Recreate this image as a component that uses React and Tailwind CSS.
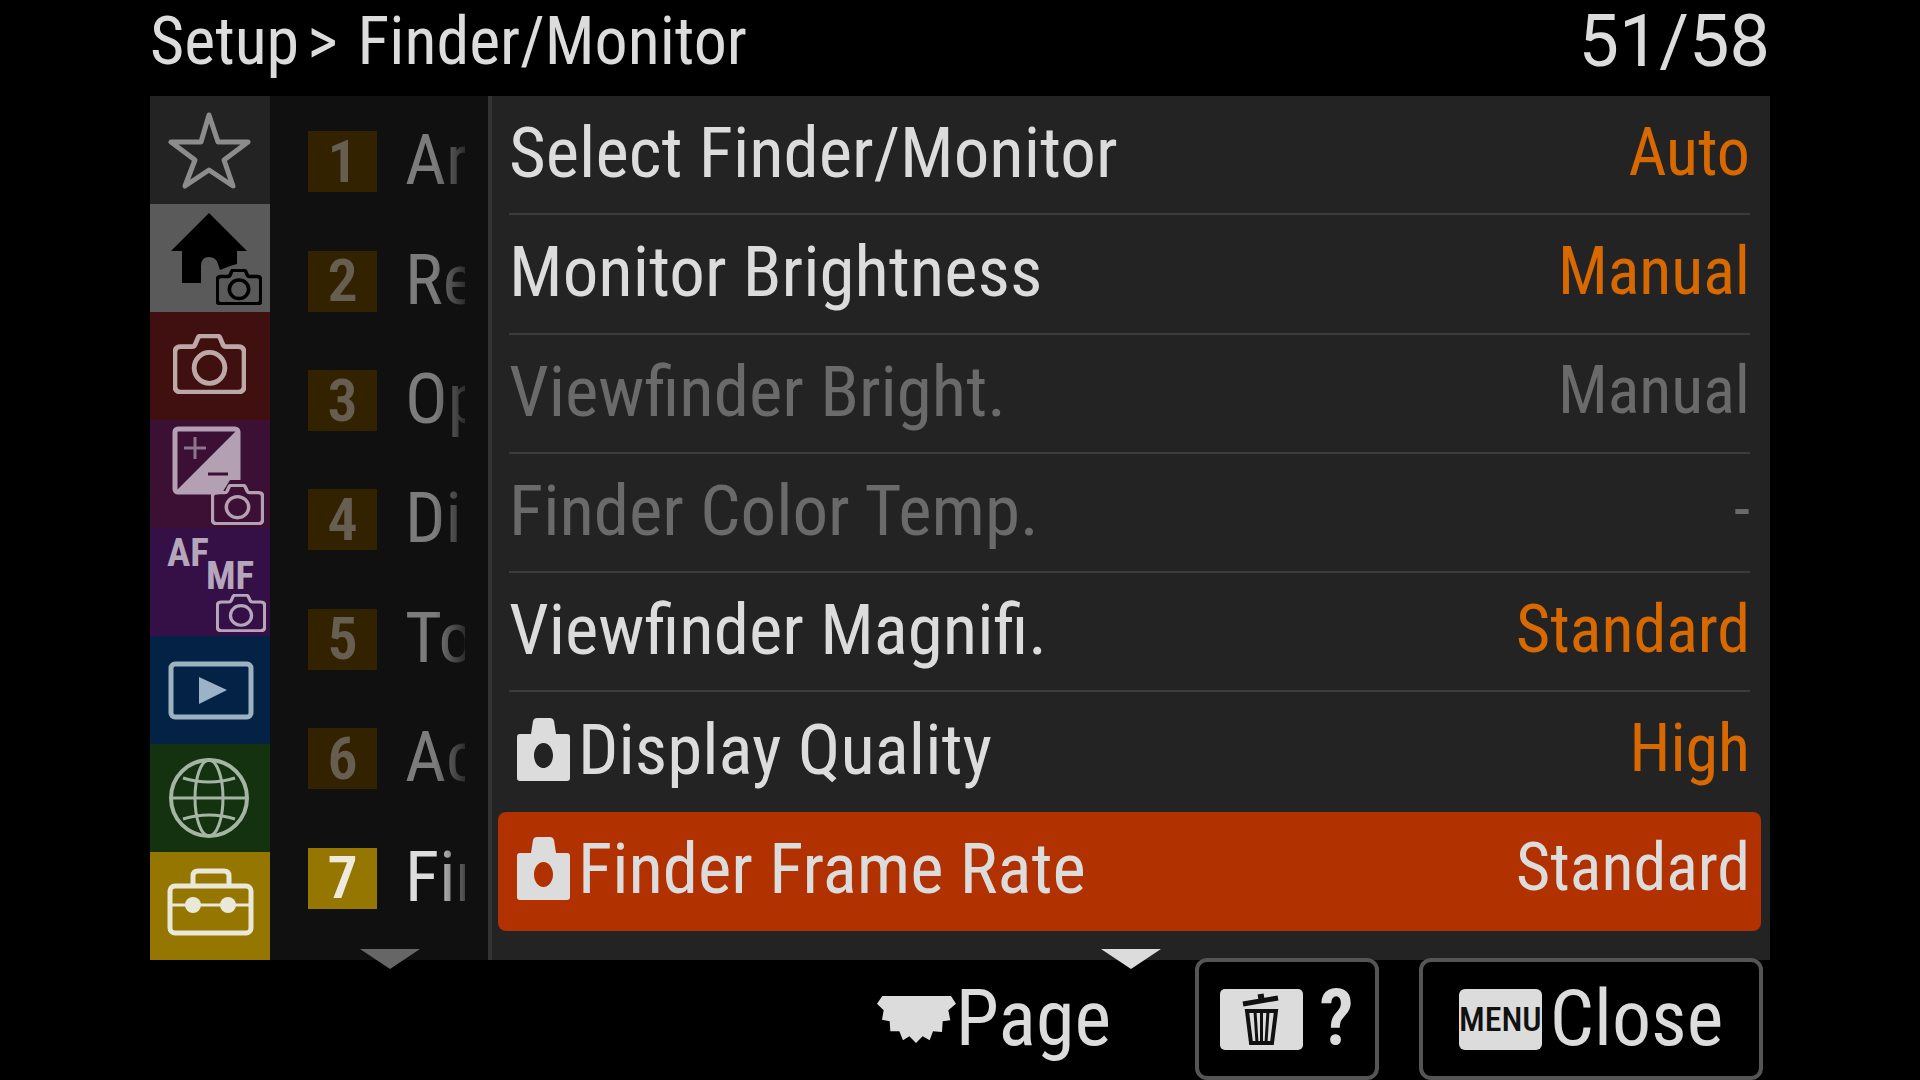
import React, { useState } from "react";

const CameraOutline = ({ x, y, width, height, stroke, fill = "none", sw = 5 }) => (
  <svg x={x} y={y} width={width} height={height} viewBox="0 0 76 62" preserveAspectRatio="none">
    <path
      d="M8 13H20Q22 13 23 11L26 4Q27 2 29 2H46Q48 2 49 4L52 11Q53 13 55 13H68Q74 13 74 19V54Q74 60 68 60H8Q2 60 2 54V19Q2 13 8 13Z"
      fill={fill}
      stroke={stroke}
      strokeWidth={sw}
      strokeLinejoin="round"
    />
    <circle cx="38" cy="35" r="16" fill="none" stroke={stroke} strokeWidth={sw} />
  </svg>
);

const Tile = ({ children }) => (
  <svg viewBox="0 0 120 108" className="w-[120px] h-[108px]" aria-hidden="true">
    {children}
  </svg>
);

const tabs = [
  {
    name: "My Menu",
    bg: "bg-[#232323]",
    icon: (
      <Tile>
        <path
          d="M59 19L68 46H98L74 64L83 90L59 74L35 90L45 64L21 46H51Z"
          fill="none"
          stroke="#8c8c8c"
          strokeWidth="5"
          strokeLinejoin="round"
        />
      </Tile>
    ),
  },
  {
    name: "Main",
    bg: "bg-[#5a5a5a]",
    icon: (
      <Tile>
        <path
          d="M59 9L97 47H87V60L80 62L70 66L68 60Q66 53 59 53Q51 53 51 62V79H32V47H21Z"
          fill="#000"
        />
        <CameraOutline x={66} y={65} width={46} height={36} stroke="#000" sw={6} />
      </Tile>
    ),
  },
  {
    name: "Shooting",
    bg: "bg-[#401010]",
    icon: (
      <Tile>
        <CameraOutline x={23} y={22} width={73} height={60} stroke="#bda8a8" sw={5} />
      </Tile>
    ),
  },
  {
    name: "Exposure/Color",
    bg: "bg-[#3c1034]",
    icon: (
      <Tile>
        <rect x="25" y="9" width="63" height="63" rx="3" fill="none" stroke="#b3a0b3" strokeWidth="5" />
        <path d="M88 9V72H25Z" fill="#b3a0b3" />
        <path d="M45 17V39M34 28H56" stroke="#8e758e" strokeWidth="3" />
        <path d="M58 54H78" stroke="#3c1034" strokeWidth="3" />
        <path d="M60 108V78L72 73L80 60H97L104 73L120 78V108Z" fill="#3c1034" />
        <CameraOutline x={61} y={64} width={53} height={41} stroke="#b3a0b3" />
      </Tile>
    ),
  },
  {
    name: "Focus",
    bg: "bg-[#341046]",
    icon: (
      <Tile>
        <g className="font-['Roboto_Condensed','Liberation_Sans',sans-serif] font-bold" fill="#b6a6bc" fontSize="39">
          <text x="17" y="38">AF</text>
          <text x="56" y="61">MF</text>
        </g>
        <CameraOutline x={66} y={66} width={50} height={38} stroke="#b6a6bc" />
      </Tile>
    ),
  },
  {
    name: "Playback",
    bg: "bg-[#042246]",
    icon: (
      <Tile>
        <rect x="21" y="28" width="80" height="53" rx="4" fill="none" stroke="#9cb2be" strokeWidth="5" />
        <path d="M49 41L77 54L49 68Z" fill="#9cb2c6" />
      </Tile>
    ),
  },
  {
    name: "Network",
    bg: "bg-[#143110]",
    icon: (
      <Tile>
        <g fill="none" stroke="#a4b5a4">
          <circle cx="59" cy="54" r="38" strokeWidth="4" />
          <g strokeWidth="3">
            <ellipse cx="59" cy="54" rx="14" ry="38" />
            <path d="M21 54H97M33 34Q59 42 85 34M33 75Q59 67 85 75" />
          </g>
        </g>
      </Tile>
    ),
  },
  {
    name: "Setup",
    bg: "bg-[#957600]",
    icon: (
      <Tile>
        <g fill="none" stroke="#eae8d8">
          <rect x="20" y="34" width="81" height="47" rx="5" strokeWidth="5" />
          <path d="M43 34V24Q43 19 48 19H74Q79 19 79 24V34" strokeWidth="5" />
          <path d="M20 53H101" strokeWidth="3" />
        </g>
        <circle cx="43" cy="53" r="8" fill="#eae8d8" />
        <circle cx="78" cy="53" r="8" fill="#eae8d8" />
      </Tile>
    ),
  },
];

const groups = ["Ar", "Re", "Op", "Di", "To", "Ac", "Fin"];

const settings = [
  { label: "Select Finder/Monitor", value: "Auto" },
  { label: "Monitor Brightness", value: "Manual" },
  { label: "Viewfinder Bright.", value: "Manual", disabled: true },
  { label: "Finder Color Temp.", value: "-", disabled: true },
  { label: "Viewfinder Magnifi.", value: "Standard" },
  { label: "Display Quality", value: "High", still: true },
  { label: "Finder Frame Rate", value: "Standard", still: true },
];

const StillIcon = () => (
  <svg viewBox="0 0 53 63" className="w-[53px] h-[63px] mx-2" aria-hidden="true">
    <path
      fillRule="evenodd"
      fill="#dcdcdc"
      d="M3 16H14L16 3Q17 0 20 0H33Q36 0 37 3L39 16H50Q53 16 53 19V60Q53 63 50 63H3Q0 63 0 60V19Q0 16 3 16ZM26.5 25C21 25 17 31 17 37.500S21 50 26.500 50S36 44 36 37.500S32 25 26.500 25Z"
    />
  </svg>
);

const DialIcon = () => (
  <svg viewBox="50 187 237 141" className="w-[79px] h-[47px]" aria-hidden="true">
    <path
      fill="#dcdcdc"
      d="M50 210L66 187H272L287 210L264 230L270 260L247 263L245 295L218 293L208 320L187 308L167 328L147 308L128 320L117 293L90 293L88 263L65 258L70 230Z"
    />
  </svg>
);

const TrashIcon = () => (
  <svg viewBox="0 0 83 61" className="w-[83px] h-[61px]" aria-hidden="true">
    <rect width="83" height="61" rx="5" fill="#dcdcdc" />
    <g fill="none" stroke="#111">
      <path d="M23 15L58 9" strokeWidth="5" />
      <path d="M38 8L44 7" strokeWidth="5" />
      <path d="M27 22H56L52 54H31Z" strokeWidth="4" />
      <path d="M35 22L37 54M41.500 22V54M48 22L46 54" strokeWidth="3" />
    </g>
  </svg>
);

const DownArrow = ({ className }) => (
  <svg viewBox="0 0 60 20" className={`absolute -bottom-[9px] w-[60px] h-[20px] ${className}`} aria-hidden="true">
    <path d="M0 0H60L30 20Z" fill="currentColor" />
  </svg>
);

function App() {
  const [activeTab, setActiveTab] = useState(7);
  const [activeGroup, setActiveGroup] = useState(6);
  const [selected, setSelected] = useState(6);

  return (
    <div className="min-h-screen bg-black px-[150px] text-[#dcdcdc] font-['Roboto_Condensed','Liberation_Sans',sans-serif] whitespace-nowrap">
      {/* Header */}
      <header className="flex h-24 items-center justify-between pb-3">
        <h1 className="flex items-center text-[66px] leading-none">
          <span>Setup</span>
          <span className="ml-2 mr-5">&gt;</span>
          <span>Finder/Monitor</span>
        </h1>
        <span className="font-[Roboto,'Liberation_Sans',sans-serif] text-[72px] leading-none">51/58</span>
      </header>

      <main className="flex h-[864px]">
        {/* Category tabs */}
        <nav className="grid w-[120px] shrink-0 grid-rows-8">
          {tabs.map((tab, i) => (
            <button
              key={tab.name}
              aria-label={tab.name}
              aria-current={activeTab === i}
              onClick={() => setActiveTab(i)}
              className={tab.bg}
            >
              {tab.icon}
            </button>
          ))}
        </nav>

        {/* Groups */}
        <div className="relative w-[218px] shrink-0 bg-[#101010]">
          <div className="grid h-[836px] grid-rows-7">
            {groups.map((group, i) => (
              <button
                key={group}
                onClick={() => setActiveGroup(i)}
                className={`flex items-center gap-7 pl-[38px] pt-3 leading-none ${
                  activeGroup === i ? "text-[#dcdcdc]" : "text-[#7c7c7c]"
                }`}
              >
                <span
                  className={`flex h-[61px] w-[69px] shrink-0 items-center justify-center text-[60px] font-semibold ${
                    activeGroup === i ? "bg-[#957600] text-[#eeeadc]" : "bg-[#332200] text-[#665e50]"
                  }`}
                >
                  {i + 1}
                </span>
                <span className="w-[60px] overflow-hidden pb-1 text-left text-[71px] [mask-image:linear-gradient(to_right,#000_50%,#0004)]">
                  {group}
                </span>
              </button>
            ))}
          </div>
          <DownArrow className="left-[90px] text-[#666666]" />
        </div>

        {/* Settings */}
        <section className="relative min-w-0 flex-1 border-l-4 border-[#333333] bg-[#232323] pl-[6px] pr-[9px]">
          <ul className="grid h-[835px] grid-rows-7">
            {settings.map((item, i) => (
              <li
                key={item.label}
                className={selected === i ? "rounded-lg bg-[#b13200] px-[11px]" : "px-[11px]"}
              >
                <button
                  disabled={item.disabled}
                  onClick={() => setSelected(i)}
                  className={`flex h-full w-full items-center justify-between border-b-2 pb-1 leading-none ${
                    selected === i || i === selected - 1 ? "border-transparent" : "border-[#3c3c3c]"
                  } ${item.disabled ? "text-[#6a6a6a]" : "text-[#dcdcdc]"}`}
                >
                  <span className="flex items-center text-[71px]">
                    {item.still && <StillIcon />}
                    {item.label}
                  </span>
                  <span
                    className={`text-[66px] ${
                      item.disabled ? "text-[#6a6a6a]" : selected === i ? "text-[#dcdcdc]" : "text-[#d86800]"
                    }`}
                  >
                    {item.value}
                  </span>
                </button>
              </li>
            ))}
          </ul>
          <DownArrow className="left-1/2 -translate-x-1/2 text-[#dcdcdc]" />
        </section>
      </main>

      {/* Footer */}
      <footer className="flex h-[120px] items-center justify-end pb-[2px] pr-[7px] text-[78px] leading-none">
        <div className="mr-[84px] flex items-center">
          <DialIcon />
          <span>Page</span>
        </div>
        <button aria-label="Help" className="relative z-10 mr-10 flex h-[122px] w-[184px] items-center justify-center gap-4 rounded-xl border-4 border-[#555555] bg-black">
          <TrashIcon />
          <span className="text-[78px] font-semibold">?</span>
        </button>
        <button className="relative z-10 flex h-[122px] w-[344px] items-center justify-center gap-2 rounded-xl border-4 border-[#555555] bg-black">
          <span className="flex h-[61px] w-[83px] items-center justify-center rounded-md bg-[#dcdcdc] text-[34px] font-medium text-[#111111]">
            MENU
          </span>
          <span>Close</span>
        </button>
      </footer>
    </div>
  );
}

export default App;
